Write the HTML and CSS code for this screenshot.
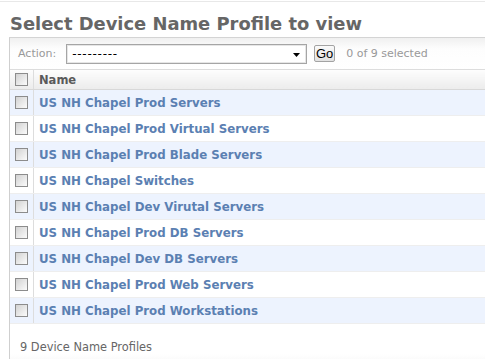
FILE: index.html
```html
<!DOCTYPE html>
<html>
<head>
<meta charset="utf-8">
<title>Select Device Name Profile to view</title>
<link rel="stylesheet" href="styles.css">
</head>
<body>
<div class="topline"></div>
<h1 class="title">Select Device Name Profile to view</h1>
<div class="module">
  <div class="actions">
    <span class="action-label">Action:</span>
    <span class="select">
      <span class="select-value">---------</span>
      <svg class="select-arrow" width="7" height="4" viewBox="0 0 7 4"><path d="M0 0H7L3.5 4Z" fill="#000"/></svg>
    </span>
    <span class="go">Go</span>
    <span class="counter">0 of 9 selected</span>
  </div>
  <table class="results">
    <thead>
      <tr>
        <th class="cb-col"><span class="cb"></span></th>
        <th class="name-col">Name</th>
      </tr>
    </thead>
    <tbody>
      <tr class="row1"><td class="cb-col"><span class="cb"></span></td><td class="name-col"><a href="#">US NH Chapel Prod Servers</a></td></tr>
      <tr class="row2"><td class="cb-col"><span class="cb"></span></td><td class="name-col"><a href="#">US NH Chapel Prod Virtual Servers</a></td></tr>
      <tr class="row1"><td class="cb-col"><span class="cb"></span></td><td class="name-col"><a href="#">US NH Chapel Prod Blade Servers</a></td></tr>
      <tr class="row2"><td class="cb-col"><span class="cb"></span></td><td class="name-col"><a href="#">US NH Chapel Switches</a></td></tr>
      <tr class="row1"><td class="cb-col"><span class="cb"></span></td><td class="name-col"><a href="#">US NH Chapel Dev Virutal Servers</a></td></tr>
      <tr class="row2"><td class="cb-col"><span class="cb"></span></td><td class="name-col"><a href="#">US NH Chapel Prod DB Servers</a></td></tr>
      <tr class="row1"><td class="cb-col"><span class="cb"></span></td><td class="name-col"><a href="#">US NH Chapel Dev DB Servers</a></td></tr>
      <tr class="row2"><td class="cb-col"><span class="cb"></span></td><td class="name-col"><a href="#">US NH Chapel Prod Web Servers</a></td></tr>
      <tr class="row1"><td class="cb-col"><span class="cb"></span></td><td class="name-col"><a href="#">US NH Chapel Prod Workstations</a></td></tr>
    </tbody>
  </table>
  <p class="paginator">9 Device Name Profiles</p>
</div>
</body>
</html>
```
FILE: styles.css
```css
html, body {
  margin: 0;
  padding: 0;
  background: #fff;
  overflow: hidden;
}
body {
  font-family: "DejaVu Sans", Verdana, sans-serif;
  font-size: 11px;
  color: #333;
}
.topline {
  height: 1px;
  margin-top: 1px;
  background: #e8e8e8;
}
.title {
  margin: 11px 0 2px 10px;
  font-size: 17.9px;
  line-height: 22px;
  font-weight: bold;
  color: #666;
}
.module {
  margin-left: 9px;
  border-left: 1px solid #cfcfcf;
  border-top: 1px solid #d4d4d4;
}
.actions {
  height: 31px;
  display: flex;
  align-items: center;
  padding-left: 8px;
  background: linear-gradient(#f0f0f0, #fdfdfd 35%, #fff);
  border-bottom: 1px solid #ddd;
}
.action-label {
  color: #999;
  font-size: 11px;
  margin-right: 10px;
}
.select {
  box-sizing: border-box;
  width: 241px;
  height: 20px;
  border: 1px solid #a5a5a5;
  box-shadow: inset 0 0 0 1px #e6e6e6;
  background: #fff;
  display: flex;
  align-items: center;
  padding: 0 6px 0 5px;
}
.select-value {
  flex: 1;
  color: #000;
  font-size: 12px;
  letter-spacing: 0.75px;
}
.select-arrow {
  margin-top: 2px;
}
.go {
  box-sizing: border-box;
  margin-left: 7px;
  width: 21px;
  height: 17px;
  border: 1px solid #a3a3a3;
  border-radius: 2px;
  background: linear-gradient(#fafafa, #e2e2e2);
  color: #000;
  font-family: "Liberation Sans", Arial, sans-serif;
  font-size: 13px;
  line-height: 15px;
  text-align: center;
}
.counter {
  margin-left: 11px;
  color: #999;
  font-size: 11px;
}
.results {
  width: 100%;
  border-collapse: collapse;
}
.results th {
  height: 19px;
  padding: 0;
  text-align: left;
  background: linear-gradient(#fdfdfd, #ececec);
  border-bottom: 1px solid #d8d8d8;
  font-size: 11.5px;
  font-weight: bold;
  color: #5a5a5a;
}
.results td {
  height: 25px;
  padding: 0;
  border-bottom: 1px solid #eee;
}
.cb-col {
  width: 23px;
  border-right: 1px solid #ddd;
}
.name-col {
  padding-left: 5px !important;
}
.cb {
  display: block;
  box-sizing: border-box;
  width: 13px;
  height: 13px;
  margin-left: 5px;
  border: 1px solid #8c8c8c;
  background: linear-gradient(135deg, #d2d2d2, #efefef 70%, #fbfbfb);
}
.row1 td {
  background: #edf3fe;
}
.row2 td {
  background: #fff;
}
.results a {
  color: #5b80b2;
  font-weight: bold;
  font-size: 11.8px;
  text-decoration: none;
}
.paginator {
  margin: 0;
  padding: 12px 0 12px 10px;
  line-height: 22px;
  font-size: 11.4px;
  color: #666;
  background: linear-gradient(#fff 65%, #f3f3f3);
}
```
